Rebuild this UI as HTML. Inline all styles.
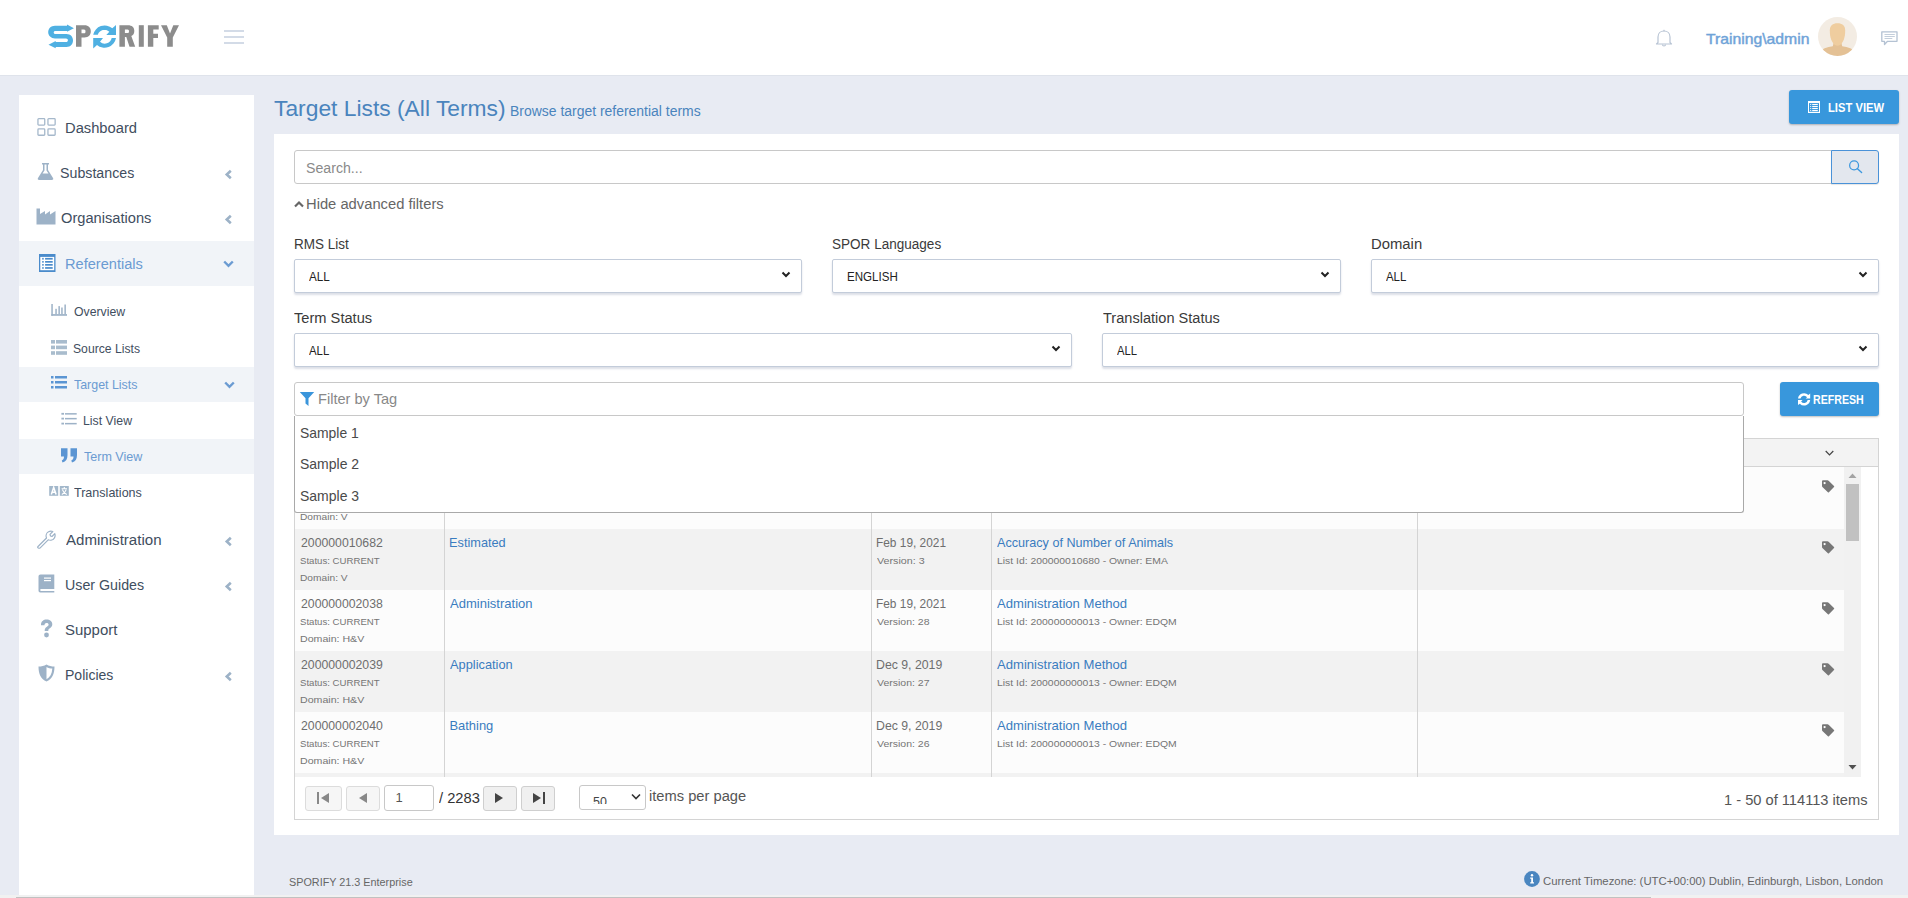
<!DOCTYPE html>
<html><head><meta charset="utf-8"><title>SPORIFY - Target Lists</title>
<style>
html,body{margin:0;padding:0;}
body{width:1908px;height:898px;overflow:hidden;position:relative;background:#e8ebf3;font-family:"Liberation Sans", sans-serif;}
</style></head><body>
<div style="position:absolute;left:0px;top:0px;width:1908px;height:75px;background:#fff;"></div>
<div style="position:absolute;left:0px;top:75px;width:1908px;height:1px;background:#dfe3eb;"></div>
<svg style="position:absolute;left:46px;top:22px" width="140" height="30" viewBox="46 22 140 30">
<g fill="#4fb0e2">
<path d="M67 25.7 L67 24.5 L73.9 28.2 L67 31.7 L67 30.9 L55.5 30.9 C54.3 30.9 53.7 31.6 53.7 32.45 C53.7 33.3 54.3 34 55.5 34 L66.5 34 C70.5 34 73 36.8 73 40.4 C73 44 70.5 46.9 66.5 46.9 L55.7 46.9 L55.7 48.2 L48.5 44.7 L55.7 41 L55.7 42 L66 42 C67.2 42 67.9 41.2 67.9 40.2 C67.9 39.2 67.2 38.4 66 38.4 L55 38.4 C51 38.4 48.2 35.5 48.2 32.2 C48.2 28.5 51 25.7 55 25.7 Z"/>
<path d="M93.2 34.8 A11.7 11.7 0 0 1 112.3 28.3 L116 25 L116 34.9 L106.3 34.9 L109.3 31.8 A7 7 0 0 0 97.8 34.8 Z"/>
<path d="M116 38 A11.7 11.7 0 0 1 97 45 L93.2 48.6 L93.2 38 L103 38 L100 41.7 A7 7 0 0 0 111.7 38 Z"/>
</g>
<g fill="#8c8c8c">
<path d="M76 25.2 L84.5 25.2 C88.5 25.2 90.8 27.5 90.8 31.3 C90.8 35.2 88.5 37.5 84.5 37.5 L81.5 37.5 L81.5 46.8 L76 46.8 Z M81.5 29.5 L81.5 33.3 L84 33.3 C85 33.3 85.5 32.6 85.5 31.4 C85.5 30.2 85 29.5 84 29.5 Z"/>
<path d="M119.4 25.2 L128 25.2 C132 25.2 134.3 27.3 134.3 31 C134.3 33.5 133.2 35.2 131.3 36.1 L135.2 46.8 L129.5 46.8 L126.3 37.1 L124.9 37.1 L124.9 46.8 L119.4 46.8 Z M124.9 29.4 L124.9 33.1 L127.5 33.1 C128.5 33.1 129 32.4 129 31.2 C129 30.1 128.5 29.4 127.5 29.4 Z"/>
<rect x="138.8" y="25.2" width="5" height="21.6"/>
<path d="M147.9 25.2 L158.7 25.2 L158.7 29.6 L153.3 29.6 L153.3 33.7 L158 33.7 L158 38 L153.3 38 L153.3 46.8 L147.9 46.8 Z"/>
<path d="M161 25.2 L166.8 25.2 L170 33.5 L173.3 25.2 L179 25.2 L172.8 37.6 L172.8 46.8 L167.2 46.8 L167.2 37.6 Z"/>
</g></svg>
<div style="position:absolute;left:224px;top:30px;width:20px;height:2px;background:#d3dbe7;"></div>
<div style="position:absolute;left:224px;top:36px;width:20px;height:2px;background:#d3dbe7;"></div>
<div style="position:absolute;left:224px;top:42px;width:20px;height:2px;background:#d3dbe7;"></div>
<svg style="position:absolute;left:1654px;top:28px" width="20" height="20" viewBox="0 0 20 20">
<path d="M4 14.5 L4 9 C4 5.5 6.5 3 10 3 C13.5 3 16 5.5 16 9 L16 14.5 L17.5 16 L2.5 16 Z" fill="none" stroke="#b8c4d4" stroke-width="1.2" stroke-linejoin="round"/>
<path d="M8.5 16.5 C8.5 17.5 9.2 18 10 18 C10.8 18 11.5 17.5 11.5 16.5" fill="none" stroke="#b8c4d4" stroke-width="1.2"/>
<rect x="9.4" y="1.8" width="1.2" height="1.5" fill="#b8c4d4"/>
</svg>
<div style="position:absolute;left:1705.70px;top:32.22px;font-size:14.97px;line-height:14.97px;color:#6fa3d8;white-space:nowrap;transform:scaleX(1.0510);transform-origin:0 0;-webkit-text-stroke:0.45px #6fa3d8;">Training\admin</div>
<svg style="position:absolute;left:1818px;top:17px" width="39" height="39" viewBox="0 0 39 39">
<defs><clipPath id="cav"><circle cx="19.5" cy="19.5" r="19.5"/></clipPath></defs>
<circle cx="19.5" cy="19.5" r="19.5" fill="#f3ece3"/>
<g clip-path="url(#cav)">
<path d="M0 35.5 C4 31.5 9 30 14.8 29.2 L15.8 25 L23.2 25 L24.2 29.2 C30 30 35 31.5 39 35.5 L39 39 L0 39 Z" fill="#e4c195"/>
<path d="M11.8 13.5 C11.8 8.8 14.8 6.3 19.5 6.3 C24.2 6.3 27.2 8.8 27.2 13.5 C27.2 20 25.5 25.5 22 28 C20.5 29 18.5 29 17 28 C13.5 25.5 11.8 20 11.8 13.5 Z" fill="#efcd9f"/>
</g></svg>
<svg style="position:absolute;left:1880px;top:30px" width="19" height="16" viewBox="0 0 19 16">
<path d="M1.8 1.8 L17 1.8 L17 11.3 L7.5 11.3 L4.5 14.5 L4.5 11.3 L1.8 11.3 Z" fill="none" stroke="#b4c2d3" stroke-width="1.3" stroke-linejoin="round"/>
<rect x="4.5" y="4" width="10.3" height="0.8" fill="#b4c2d3"/>
<rect x="4.5" y="6" width="10.3" height="0.8" fill="#b4c2d3"/>
<rect x="4.5" y="8" width="7.8" height="0.8" fill="#b4c2d3"/>
</svg>
<div style="position:absolute;left:19px;top:95px;width:235px;height:803px;background:#fff;"></div>
<div style="position:absolute;left:19px;top:241px;width:235px;height:45px;background:#f1f4f8;"></div>
<div style="position:absolute;left:19px;top:367px;width:235px;height:35px;background:#f1f4f8;"></div>
<div style="position:absolute;left:19px;top:439px;width:235px;height:35px;background:#f1f4f8;"></div>
<div style="position:absolute;left:65.09px;top:121.10px;font-size:14.53px;line-height:14.53px;color:#3f4e60;white-space:nowrap;transform:scaleX(1.0143);transform-origin:0 0;">Dashboard</div>
<div style="position:absolute;left:59.62px;top:166.10px;font-size:14.53px;line-height:14.53px;color:#3f4e60;white-space:nowrap;transform:scaleX(0.9787);transform-origin:0 0;">Substances</div>
<div style="position:absolute;left:60.60px;top:211.10px;font-size:14.53px;line-height:14.53px;color:#3f4e60;white-space:nowrap;transform:scaleX(1.0090);transform-origin:0 0;">Organisations</div>
<div style="position:absolute;left:65.09px;top:257.10px;font-size:14.53px;line-height:14.53px;color:#6b9bd2;white-space:nowrap;transform:scaleX(1.0053);transform-origin:0 0;">Referentials</div>
<div style="position:absolute;left:73.60px;top:305.08px;font-size:13.37px;line-height:13.37px;color:#3f4e60;white-space:nowrap;transform:scaleX(0.9179);transform-origin:0 0;">Overview</div>
<div style="position:absolute;left:72.69px;top:342.08px;font-size:13.37px;line-height:13.37px;color:#3f4e60;white-space:nowrap;transform:scaleX(0.9111);transform-origin:0 0;">Source Lists</div>
<div style="position:absolute;left:73.60px;top:378.08px;font-size:13.37px;line-height:13.37px;color:#6b9bd2;white-space:nowrap;transform:scaleX(0.9294);transform-origin:0 0;">Target Lists</div>
<div style="position:absolute;left:82.88px;top:414.28px;font-size:13.37px;line-height:13.37px;color:#3f4e60;white-space:nowrap;transform:scaleX(0.9212);transform-origin:0 0;">List View</div>
<div style="position:absolute;left:83.80px;top:449.68px;font-size:13.37px;line-height:13.37px;color:#6b9bd2;white-space:nowrap;transform:scaleX(0.9387);transform-origin:0 0;">Term View</div>
<div style="position:absolute;left:73.90px;top:486.38px;font-size:13.37px;line-height:13.37px;color:#3f4e60;white-space:nowrap;transform:scaleX(0.9389);transform-origin:0 0;">Translations</div>
<div style="position:absolute;left:65.80px;top:533.10px;font-size:14.53px;line-height:14.53px;color:#3f4e60;white-space:nowrap;transform:scaleX(1.0391);transform-origin:0 0;">Administration</div>
<div style="position:absolute;left:64.82px;top:578.30px;font-size:14.53px;line-height:14.53px;color:#3f4e60;white-space:nowrap;transform:scaleX(0.9812);transform-origin:0 0;">User Guides</div>
<div style="position:absolute;left:64.77px;top:623.10px;font-size:14.53px;line-height:14.53px;color:#3f4e60;white-space:nowrap;transform:scaleX(1.0300);transform-origin:0 0;">Support</div>
<div style="position:absolute;left:64.83px;top:667.90px;font-size:14.53px;line-height:14.53px;color:#3f4e60;white-space:nowrap;transform:scaleX(0.9673);transform-origin:0 0;">Policies</div>
<svg style="position:absolute;left:224px;top:169px" width="9" height="11" viewBox="0 0 9 11"><path d="M6.8 1.8 L2.8 5.5 L6.8 9.2" fill="none" stroke="#9db2c7" stroke-width="2.6"/></svg>
<svg style="position:absolute;left:224px;top:214px" width="9" height="11" viewBox="0 0 9 11"><path d="M6.8 1.8 L2.8 5.5 L6.8 9.2" fill="none" stroke="#9db2c7" stroke-width="2.6"/></svg>
<svg style="position:absolute;left:224px;top:536px" width="9" height="11" viewBox="0 0 9 11"><path d="M6.8 1.8 L2.8 5.5 L6.8 9.2" fill="none" stroke="#9db2c7" stroke-width="2.6"/></svg>
<svg style="position:absolute;left:224px;top:581px" width="9" height="11" viewBox="0 0 9 11"><path d="M6.8 1.8 L2.8 5.5 L6.8 9.2" fill="none" stroke="#9db2c7" stroke-width="2.6"/></svg>
<svg style="position:absolute;left:224px;top:671px" width="9" height="11" viewBox="0 0 9 11"><path d="M6.8 1.8 L2.8 5.5 L6.8 9.2" fill="none" stroke="#9db2c7" stroke-width="2.6"/></svg>
<svg style="position:absolute;left:223px;top:260px" width="11" height="8" viewBox="0 0 11 8"><path d="M1.2 1.5 L5.5 5.8 L9.8 1.5" fill="none" stroke="#6b9bd2" stroke-width="2.4"/></svg>
<svg style="position:absolute;left:224px;top:381px" width="11" height="8" viewBox="0 0 11 8"><path d="M1.2 1.5 L5.5 5.8 L9.8 1.5" fill="none" stroke="#6b9bd2" stroke-width="2.4"/></svg>
<svg style="position:absolute;left:37px;top:118px" width="19" height="19" viewBox="0 0 19 19" fill="none" stroke="#a5b8cb" stroke-width="1.3">
<rect x="0.95" y="0.65" width="6.8" height="6.4" rx="0.8"/><rect x="10.95" y="0.65" width="7.2" height="6.4" rx="0.8"/>
<rect x="0.95" y="10.85" width="6.8" height="6.4" rx="0.8"/><rect x="10.95" y="10.85" width="7.2" height="6.4" rx="0.8"/></svg>
<svg style="position:absolute;left:37px;top:162px" width="17" height="19" viewBox="0 0 17 19">
<path d="M5 1 L12 1 L12 2.5 L11 2.5 L11 8 L16 16 C16.7 17.3 16 18 14.8 18 L2.2 18 C1 18 0.3 17.3 1 16 L6 8 L6 2.5 L5 2.5 Z" fill="#9db2c7"/>
<path d="M7.5 2.5 L9.5 2.5 L9.5 8.5 L11.5 11.5 L5.5 11.5 L7.5 8.5 Z" fill="#fff"/></svg>
<svg style="position:absolute;left:36px;top:208px" width="20" height="17" viewBox="0 0 20 17">
<path d="M0.5 0.5 L4 0.5 L4 6 L9 3 L9 6.5 L14 3 L14 6.5 L19.5 3 L19.5 16.5 L0.5 16.5 Z" fill="#9db2c7"/></svg>
<svg style="position:absolute;left:39px;top:254px" width="17" height="18" viewBox="0 0 17 18">
<rect x="0" y="0" width="16.5" height="18" fill="#4a8bcb"/><rect x="1.3" y="2.9" width="13.9" height="13.3" fill="#fff"/>
<g fill="#4a8bcb"><rect x="3.2" y="3.9" width="1.5" height="1.7"/><rect x="6.1" y="3.9" width="7.6" height="1.7"/>
<rect x="3.2" y="7" width="1.5" height="1.7"/><rect x="6.1" y="7" width="7.6" height="1.7"/>
<rect x="3.2" y="10" width="1.5" height="1.7"/><rect x="6.1" y="10" width="7.6" height="1.7"/>
<rect x="3.2" y="13.1" width="1.5" height="1.7"/><rect x="6.1" y="13.1" width="7.6" height="1.7"/></g></svg>
<svg style="position:absolute;left:51px;top:304px" width="16" height="12" viewBox="0 0 16 12" fill="#9db2c7">
<rect x="0.3" y="0" width="1.5" height="11.8"/><rect x="0.3" y="10.1" width="15.7" height="1.7"/>
<rect x="4.3" y="4.8" width="1.5" height="5.3"/><rect x="7.4" y="2.1" width="1.5" height="8"/><rect x="10.2" y="3.5" width="1.5" height="6.6"/><rect x="13.4" y="0.5" width="1.5" height="9.6"/></svg>
<svg style="position:absolute;left:51px;top:340px" width="16" height="15" viewBox="0 0 16 15" fill="#a9bccd">
<rect x="0" y="0" width="4" height="3.6"/><rect x="5" y="0" width="11" height="3.6"/>
<rect x="0" y="5.6" width="4" height="3.6"/><rect x="5" y="5.6" width="11" height="3.6"/>
<rect x="0" y="11.2" width="4" height="3.6"/><rect x="5" y="11.2" width="11" height="3.6"/></svg>
<svg style="position:absolute;left:51px;top:376px" width="16" height="13" viewBox="0 0 16 13" fill="#5b95d3">
<rect x="0" y="0" width="2.5" height="2.5"/><rect x="4" y="0" width="12" height="2.5"/>
<rect x="0" y="5" width="2.5" height="2.5"/><rect x="4" y="5" width="12" height="2.5"/>
<rect x="0" y="10" width="2.5" height="2.5"/><rect x="4" y="10" width="12" height="2.5"/></svg>
<svg style="position:absolute;left:61px;top:412px" width="16" height="14" viewBox="0 0 16 14" fill="#9db2c7">
<rect x="0.4" y="0.9" width="2.6" height="1.8"/><rect x="4" y="1.1" width="11.7" height="1.5"/>
<rect x="0.4" y="5.7" width="2.6" height="1.8"/><rect x="4" y="5.9" width="11.7" height="1.5"/>
<rect x="0.4" y="10.7" width="2.6" height="1.8"/><rect x="4" y="10.9" width="11.7" height="1.5"/></svg>
<svg style="position:absolute;left:61px;top:448px" width="16" height="15" viewBox="0 0 16 15" fill="#5b95d3">
<path d="M0 0.3 L6.5 0.3 L6.5 7 C6.5 11 5 13.5 1.5 14.5 L0.8 12.5 C2.5 11.8 3 10.5 3 8.5 L0 8.5 Z"/>
<path d="M9.5 0.3 L16 0.3 L16 7 C16 11 14.5 13.5 11 14.5 L10.3 12.5 C12 11.8 12.5 10.5 12.5 8.5 L9.5 8.5 Z"/></svg>
<svg style="position:absolute;left:49px;top:486px" width="20" height="10" viewBox="0 0 20 10">
<rect x="0.2" y="0" width="9" height="9.8" fill="#a3b8cb"/><rect x="10.8" y="0" width="9" height="9.8" fill="#a3b8cb"/>
<path d="M2.3 8.6 L4.7 1.4 L7.1 8.6 M3.2 6.2 L6.2 6.2" stroke="#fff" stroke-width="1.5" fill="none"/>
<path d="M15.3 1 L15.3 2.3 M12.6 2.8 L18 2.8 M13.4 3.6 C14.2 6 15.6 7.6 17.8 8.6 M17.2 3.6 C16.4 6 15 7.6 12.8 8.6" stroke="#fff" stroke-width="1.1" fill="none"/></svg>
<svg style="position:absolute;left:37px;top:530px" width="19" height="19" viewBox="0 0 19 19">
<path d="M1.5 16 L9.5 8 C8.5 5.5 9.5 2.8 11.5 1.8 C13 1 14.5 1 15.8 1.5 L13 4.3 L13.5 6 L15 6.5 L17.8 3.7 C18.3 5 18.2 6.5 17.4 8 C16.3 10 13.6 10.8 11.2 9.8 L3.2 17.8 C2.5 18.5 1.2 18.4 0.8 17.6 C0.4 17 0.6 16.8 1.5 16 Z" fill="none" stroke="#9db2c7" stroke-width="1.2" stroke-linejoin="round"/></svg>
<svg style="position:absolute;left:38px;top:574px" width="17" height="19" viewBox="0 0 17 19">
<path d="M2.5 0.5 L16.3 0.5 L16.3 15 L3.5 15 C2.5 15 2.2 15.5 2.2 16 C2.2 16.5 2.5 17 3.5 17 L16.3 17 L16.3 18.5 L2.5 18.5 C1.2 18.5 0.5 17.5 0.5 16.5 L0.5 2.5 C0.5 1.3 1.3 0.5 2.5 0.5 Z" fill="#9db2c7"/>
<rect x="6" y="3.5" width="7" height="1.2" fill="#fff"/><rect x="6" y="6" width="7" height="1.2" fill="#fff"/></svg>
<svg style="position:absolute;left:40px;top:619px" width="13" height="19" viewBox="0 0 13 19">
<path d="M1 5.5 C1 2.5 3.5 0.5 6.5 0.5 C9.8 0.5 12.3 2.5 12.3 5.3 C12.3 7.5 11 8.6 9.5 9.5 C8.5 10.1 8.3 10.5 8.3 12 L4.7 12 C4.7 9.8 5.2 8.8 7 7.7 C8.2 7 8.6 6.5 8.6 5.6 C8.6 4.6 7.8 4 6.6 4 C5.3 4 4.5 4.8 4.5 6.2 L1 6.2 Z" fill="#9db2c7"/>
<circle cx="6.5" cy="16" r="2.4" fill="#9db2c7"/></svg>
<svg style="position:absolute;left:38px;top:664px" width="17" height="18" viewBox="0 0 17 18">
<path d="M8.5 0.5 C11 2 13.5 2.5 16.5 2.5 C16.5 10 14 15 8.5 17.5 C3 15 0.5 10 0.5 2.5 C3.5 2.5 6 2 8.5 0.5 Z" fill="#9db2c7"/>
<path d="M8.5 3 C10.5 4 12.2 4.5 14.3 4.6 C14 10 12 13.5 8.5 15.2 Z" fill="#fff"/></svg>
<div style="position:absolute;left:274.10px;top:97.67px;font-size:22.09px;line-height:22.09px;color:#4a84bd;white-space:nowrap;transform:scaleX(1.0336);transform-origin:0 0;">Target Lists (All Terms)</div>
<div style="position:absolute;left:510.23px;top:103.82px;font-size:14.39px;line-height:14.39px;color:#4a84bd;white-space:nowrap;transform:scaleX(0.9703);transform-origin:0 0;">Browse target referential terms</div>
<div style="position:absolute;left:1789px;top:90px;width:110px;height:34px;background:#3897dc;border-radius:3px;box-shadow:0 1px 2px rgba(0,0,0,.25);"></div>
<svg style="position:absolute;left:1808px;top:101px" width="12" height="12" viewBox="0 0 12 12">
<rect x="0" y="0" width="12" height="12" fill="#fff"/><rect x="1" y="2.1" width="10" height="8.7" fill="#3897dc"/>
<g fill="#fff"><rect x="2.2" y="3" width="1" height="1.1"/><rect x="4.2" y="3" width="5.6" height="1.1"/>
<rect x="2.2" y="5" width="1" height="1.1"/><rect x="4.2" y="5" width="5.6" height="1.1"/>
<rect x="2.2" y="7" width="1" height="1.1"/><rect x="4.2" y="7" width="5.6" height="1.1"/>
<rect x="2.2" y="9" width="1" height="1.1"/><rect x="4.2" y="9" width="5.6" height="1.1"/></g></svg>
<div style="position:absolute;left:1828.11px;top:101.50px;font-size:12.65px;line-height:12.65px;color:#fff;font-weight:bold;white-space:nowrap;transform:scaleX(0.8871);transform-origin:0 0;">LIST VIEW</div>
<div style="position:absolute;left:274px;top:134px;width:1625px;height:701px;background:#fff;"></div>
<div style="position:absolute;left:294px;top:150px;width:1538px;height:34px;box-sizing:border-box;border:1px solid #c8c8c8;border-radius:3px 0 0 3px;background:#fff;"></div>
<div style="position:absolute;left:306.32px;top:161.10px;font-size:14.53px;line-height:14.53px;color:#8a8a8a;white-space:nowrap;transform:scaleX(0.9750);transform-origin:0 0;">Search...</div>
<div style="position:absolute;left:1831px;top:150px;width:48px;height:34px;box-sizing:border-box;border:1px solid #4a92d8;border-radius:0 3px 3px 0;background:#e3e7ee;box-shadow:0 1px 1px rgba(0,0,0,.1);"></div>
<svg style="position:absolute;left:1848px;top:160px" width="15" height="14" viewBox="0 0 15 14">
<circle cx="6.1" cy="5.4" r="4.45" fill="none" stroke="#3d98de" stroke-width="1.25"/><path d="M9.2 8.6 L13.6 12.6" stroke="#3d98de" stroke-width="1.4" stroke-linecap="round"/></svg>
<svg style="position:absolute;left:294px;top:200px" width="10" height="8" viewBox="0 0 10 8"><path d="M1 6.5 L5 2.5 L9 6.5" fill="none" stroke="#666" stroke-width="2.2"/></svg>
<div style="position:absolute;left:306.31px;top:196.75px;font-size:14.83px;line-height:14.83px;color:#666;white-space:nowrap;transform:scaleX(0.9942);transform-origin:0 0;">Hide advanced filters</div>
<div style="position:absolute;left:294.17px;top:237.10px;font-size:14.53px;line-height:14.53px;color:#3a3a3a;white-space:nowrap;transform:scaleX(0.9310);transform-origin:0 0;">RMS List</div>
<div style="position:absolute;left:831.87px;top:237.30px;font-size:14.53px;line-height:14.53px;color:#3a3a3a;white-space:nowrap;transform:scaleX(0.9328);transform-origin:0 0;">SPOR Languages</div>
<div style="position:absolute;left:1370.68px;top:237.10px;font-size:14.53px;line-height:14.53px;color:#3a3a3a;white-space:nowrap;transform:scaleX(1.0224);transform-origin:0 0;">Domain</div>
<div style="position:absolute;left:294.40px;top:311.10px;font-size:14.53px;line-height:14.53px;color:#3a3a3a;white-space:nowrap;transform:scaleX(1.0091);transform-origin:0 0;">Term Status</div>
<div style="position:absolute;left:1102.50px;top:311.10px;font-size:14.53px;line-height:14.53px;color:#3a3a3a;white-space:nowrap;transform:scaleX(1.0034);transform-origin:0 0;">Translation Status</div>
<div style="position:absolute;left:294px;top:259px;width:508px;height:34px;box-sizing:border-box;border:1px solid #c3ccda;border-radius:2px;background:#fff;box-shadow:0 2px 2px rgba(60,80,120,.18);"></div>
<div style="position:absolute;left:309.00px;top:270.33px;font-size:13.08px;line-height:13.08px;color:#222;white-space:nowrap;transform:scaleX(0.8913);transform-origin:0 0;">ALL</div>
<svg style="position:absolute;left:781px;top:271px" width="10" height="7" viewBox="0 0 10 7"><path d="M1.5 1.5 L5 5 L8.5 1.5" fill="none" stroke="#222" stroke-width="2"/></svg>
<div style="position:absolute;left:832px;top:259px;width:509px;height:34px;box-sizing:border-box;border:1px solid #c3ccda;border-radius:2px;background:#fff;box-shadow:0 2px 2px rgba(60,80,120,.18);"></div>
<div style="position:absolute;left:846.92px;top:270.33px;font-size:13.08px;line-height:13.08px;color:#222;white-space:nowrap;transform:scaleX(0.8839);transform-origin:0 0;">ENGLISH</div>
<svg style="position:absolute;left:1320px;top:271px" width="10" height="7" viewBox="0 0 10 7"><path d="M1.5 1.5 L5 5 L8.5 1.5" fill="none" stroke="#222" stroke-width="2"/></svg>
<div style="position:absolute;left:1371px;top:259px;width:508px;height:34px;box-sizing:border-box;border:1px solid #c3ccda;border-radius:2px;background:#fff;box-shadow:0 2px 2px rgba(60,80,120,.18);"></div>
<div style="position:absolute;left:1386.00px;top:270.33px;font-size:13.08px;line-height:13.08px;color:#222;white-space:nowrap;transform:scaleX(0.8739);transform-origin:0 0;">ALL</div>
<svg style="position:absolute;left:1858px;top:271px" width="10" height="7" viewBox="0 0 10 7"><path d="M1.5 1.5 L5 5 L8.5 1.5" fill="none" stroke="#222" stroke-width="2"/></svg>
<div style="position:absolute;left:294px;top:333px;width:778px;height:34px;box-sizing:border-box;border:1px solid #c3ccda;border-radius:2px;background:#fff;box-shadow:0 2px 2px rgba(60,80,120,.18);"></div>
<div style="position:absolute;left:309.00px;top:344.33px;font-size:13.08px;line-height:13.08px;color:#222;white-space:nowrap;transform:scaleX(0.8696);transform-origin:0 0;">ALL</div>
<svg style="position:absolute;left:1051px;top:345px" width="10" height="7" viewBox="0 0 10 7"><path d="M1.5 1.5 L5 5 L8.5 1.5" fill="none" stroke="#222" stroke-width="2"/></svg>
<div style="position:absolute;left:1102px;top:333px;width:777px;height:34px;box-sizing:border-box;border:1px solid #c3ccda;border-radius:2px;background:#fff;box-shadow:0 2px 2px rgba(60,80,120,.18);"></div>
<div style="position:absolute;left:1117.00px;top:344.33px;font-size:13.08px;line-height:13.08px;color:#222;white-space:nowrap;transform:scaleX(0.8609);transform-origin:0 0;">ALL</div>
<svg style="position:absolute;left:1858px;top:345px" width="10" height="7" viewBox="0 0 10 7"><path d="M1.5 1.5 L5 5 L8.5 1.5" fill="none" stroke="#222" stroke-width="2"/></svg>
<div style="position:absolute;left:1780px;top:382px;width:99px;height:34px;background:#3897dc;border-radius:3px;box-shadow:0 1px 2px rgba(0,0,0,.25);"></div>
<svg style="position:absolute;left:1797px;top:392px" width="15" height="15" viewBox="0 0 15 15">
<path d="M1 6.6 A6.1 6.1 0 0 1 11.4 3 L13.2 1.6 L13.2 6.6 L8.6 6.6 L10.1 5.2 A3.7 3.7 0 0 0 3.5 6.6 Z" fill="#fff"/>
<path d="M13.2 8.1 A6.1 6.1 0 0 1 2.8 11.7 L1 13.1 L1 8.1 L5.6 8.1 L4.1 9.5 A3.7 3.7 0 0 0 10.7 8.1 Z" fill="#fff"/></svg>
<div style="position:absolute;left:1813.18px;top:394.05px;font-size:12.94px;line-height:12.94px;color:#fff;font-weight:bold;white-space:nowrap;transform:scaleX(0.8200);transform-origin:0 0;">REFRESH</div>
<div style="position:absolute;left:294px;top:438px;width:1585px;height:382px;box-sizing:border-box;border:1px solid #d4d4d4;background:#fff;"></div>
<div style="position:absolute;left:295px;top:439px;width:1583px;height:27px;background:#f3f3f3;border-bottom:1px solid #d4d4d4;"></div>
<svg style="position:absolute;left:1825px;top:450px" width="9" height="7" viewBox="0 0 9 7"><path d="M0.7 1 L4.5 5 L8.3 1" fill="none" stroke="#444" stroke-width="1.2"/></svg>
<div style="position:absolute;left:295px;top:467px;width:1549px;height:310px;overflow:hidden;">
<div style="position:absolute;left:-295px;top:-467px;width:1908px;height:898px;">
<div style="position:absolute;left:295px;top:466px;width:1549px;height:63px;background:#fcfcfc;"></div>
<div style="position:absolute;left:295px;top:529px;width:1549px;height:61px;background:#f2f2f2;"></div>
<div style="position:absolute;left:295px;top:590px;width:1549px;height:61px;background:#fcfcfc;"></div>
<div style="position:absolute;left:295px;top:651px;width:1549px;height:61px;background:#f2f2f2;"></div>
<div style="position:absolute;left:295px;top:712px;width:1549px;height:61px;background:#fcfcfc;"></div>
<div style="position:absolute;left:295px;top:773px;width:1549px;height:61px;background:#f2f2f2;"></div>
<div style="position:absolute;left:444px;top:467px;width:1px;height:310px;background:#d4d4d4;"></div>
<div style="position:absolute;left:871px;top:467px;width:1px;height:310px;background:#d4d4d4;"></div>
<div style="position:absolute;left:991px;top:467px;width:1px;height:310px;background:#d4d4d4;"></div>
<div style="position:absolute;left:1417px;top:467px;width:1px;height:310px;background:#d4d4d4;"></div>
<div style="position:absolute;left:300.20px;top:511.92px;font-size:9.80px;line-height:9.80px;color:#757575;white-space:nowrap;transform:scaleX(1.0413);transform-origin:0 0;">Domain: V</div>
<svg style="position:absolute;left:1821px;top:479.8px" width="15" height="14" viewBox="0 0 15 14">
<path d="M1 1.3 Q1 0.3 2 0.3 L6.6 0.3 Q7.1 0.3 7.6 0.8 L13 6.1 Q13.5 6.6 13 7.1 L7.9 12.2 Q7.4 12.7 6.9 12.2 L1.4 6.9 Q1 6.5 1 6 Z" fill="#777"/><circle cx="3.6" cy="3.1" r="1.15" fill="#fff"/></svg>
<div style="position:absolute;left:300.60px;top:537.45px;font-size:12.94px;line-height:12.94px;color:#6e6e6e;white-space:nowrap;transform:scaleX(0.9477);transform-origin:0 0;">200000010682</div>
<div style="position:absolute;left:300.10px;top:555.72px;font-size:9.80px;line-height:9.80px;color:#757575;white-space:nowrap;transform:scaleX(0.9815);transform-origin:0 0;">Status: CURRENT</div>
<div style="position:absolute;left:300.20px;top:572.92px;font-size:9.80px;line-height:9.80px;color:#757575;white-space:nowrap;transform:scaleX(1.0413);transform-origin:0 0;">Domain: V</div>
<div style="position:absolute;left:449.41px;top:537.45px;font-size:12.94px;line-height:12.94px;color:#3a7cc0;white-space:nowrap;transform:scaleX(0.9857);transform-origin:0 0;">Estimated</div>
<div style="position:absolute;left:876.38px;top:537.45px;font-size:12.94px;line-height:12.94px;color:#6e6e6e;white-space:nowrap;transform:scaleX(0.9187);transform-origin:0 0;">Feb 19, 2021</div>
<div style="position:absolute;left:877.00px;top:555.72px;font-size:9.80px;line-height:9.80px;color:#757575;white-space:nowrap;transform:scaleX(1.0930);transform-origin:0 0;">Version: 3</div>
<div style="position:absolute;left:997.20px;top:537.45px;font-size:12.94px;line-height:12.94px;color:#3a7cc0;white-space:nowrap;transform:scaleX(0.9756);transform-origin:0 0;">Accuracy of Number of Animals</div>
<div style="position:absolute;left:997.00px;top:555.72px;font-size:9.80px;line-height:9.80px;color:#757575;white-space:nowrap;transform:scaleX(1.0596);transform-origin:0 0;">List Id: 200000010680 - Owner: EMA</div>
<svg style="position:absolute;left:1821px;top:540.8px" width="15" height="14" viewBox="0 0 15 14">
<path d="M1 1.3 Q1 0.3 2 0.3 L6.6 0.3 Q7.1 0.3 7.6 0.8 L13 6.1 Q13.5 6.6 13 7.1 L7.9 12.2 Q7.4 12.7 6.9 12.2 L1.4 6.9 Q1 6.5 1 6 Z" fill="#777"/><circle cx="3.6" cy="3.1" r="1.15" fill="#fff"/></svg>
<div style="position:absolute;left:300.60px;top:598.45px;font-size:12.94px;line-height:12.94px;color:#6e6e6e;white-space:nowrap;transform:scaleX(0.9477);transform-origin:0 0;">200000002038</div>
<div style="position:absolute;left:300.10px;top:616.72px;font-size:9.80px;line-height:9.80px;color:#757575;white-space:nowrap;transform:scaleX(0.9815);transform-origin:0 0;">Status: CURRENT</div>
<div style="position:absolute;left:300.20px;top:633.92px;font-size:9.80px;line-height:9.80px;color:#757575;white-space:nowrap;transform:scaleX(1.0831);transform-origin:0 0;">Domain: H&amp;V</div>
<div style="position:absolute;left:450.40px;top:598.45px;font-size:12.94px;line-height:12.94px;color:#3a7cc0;white-space:nowrap;transform:scaleX(1.0073);transform-origin:0 0;">Administration</div>
<div style="position:absolute;left:876.38px;top:598.45px;font-size:12.94px;line-height:12.94px;color:#6e6e6e;white-space:nowrap;transform:scaleX(0.9187);transform-origin:0 0;">Feb 19, 2021</div>
<div style="position:absolute;left:877.00px;top:616.72px;font-size:9.80px;line-height:9.80px;color:#757575;white-space:nowrap;transform:scaleX(1.0714);transform-origin:0 0;">Version: 28</div>
<div style="position:absolute;left:997.20px;top:598.45px;font-size:12.94px;line-height:12.94px;color:#3a7cc0;white-space:nowrap;transform:scaleX(1.0109);transform-origin:0 0;">Administration Method</div>
<div style="position:absolute;left:997.00px;top:616.72px;font-size:9.80px;line-height:9.80px;color:#757575;white-space:nowrap;transform:scaleX(1.0609);transform-origin:0 0;">List Id: 200000000013 - Owner: EDQM</div>
<svg style="position:absolute;left:1821px;top:601.8px" width="15" height="14" viewBox="0 0 15 14">
<path d="M1 1.3 Q1 0.3 2 0.3 L6.6 0.3 Q7.1 0.3 7.6 0.8 L13 6.1 Q13.5 6.6 13 7.1 L7.9 12.2 Q7.4 12.7 6.9 12.2 L1.4 6.9 Q1 6.5 1 6 Z" fill="#777"/><circle cx="3.6" cy="3.1" r="1.15" fill="#fff"/></svg>
<div style="position:absolute;left:300.60px;top:659.45px;font-size:12.94px;line-height:12.94px;color:#6e6e6e;white-space:nowrap;transform:scaleX(0.9477);transform-origin:0 0;">200000002039</div>
<div style="position:absolute;left:300.10px;top:677.72px;font-size:9.80px;line-height:9.80px;color:#757575;white-space:nowrap;transform:scaleX(0.9815);transform-origin:0 0;">Status: CURRENT</div>
<div style="position:absolute;left:300.20px;top:694.92px;font-size:9.80px;line-height:9.80px;color:#757575;white-space:nowrap;transform:scaleX(1.0831);transform-origin:0 0;">Domain: H&amp;V</div>
<div style="position:absolute;left:450.40px;top:659.45px;font-size:12.94px;line-height:12.94px;color:#3a7cc0;white-space:nowrap;transform:scaleX(0.9905);transform-origin:0 0;">Application</div>
<div style="position:absolute;left:876.35px;top:659.45px;font-size:12.94px;line-height:12.94px;color:#6e6e6e;white-space:nowrap;transform:scaleX(0.9500);transform-origin:0 0;">Dec 9, 2019</div>
<div style="position:absolute;left:877.00px;top:677.72px;font-size:9.80px;line-height:9.80px;color:#757575;white-space:nowrap;transform:scaleX(1.0714);transform-origin:0 0;">Version: 27</div>
<div style="position:absolute;left:997.20px;top:659.45px;font-size:12.94px;line-height:12.94px;color:#3a7cc0;white-space:nowrap;transform:scaleX(1.0109);transform-origin:0 0;">Administration Method</div>
<div style="position:absolute;left:997.00px;top:677.72px;font-size:9.80px;line-height:9.80px;color:#757575;white-space:nowrap;transform:scaleX(1.0609);transform-origin:0 0;">List Id: 200000000013 - Owner: EDQM</div>
<svg style="position:absolute;left:1821px;top:662.8px" width="15" height="14" viewBox="0 0 15 14">
<path d="M1 1.3 Q1 0.3 2 0.3 L6.6 0.3 Q7.1 0.3 7.6 0.8 L13 6.1 Q13.5 6.6 13 7.1 L7.9 12.2 Q7.4 12.7 6.9 12.2 L1.4 6.9 Q1 6.5 1 6 Z" fill="#777"/><circle cx="3.6" cy="3.1" r="1.15" fill="#fff"/></svg>
<div style="position:absolute;left:300.60px;top:720.45px;font-size:12.94px;line-height:12.94px;color:#6e6e6e;white-space:nowrap;transform:scaleX(0.9477);transform-origin:0 0;">200000002040</div>
<div style="position:absolute;left:300.10px;top:738.72px;font-size:9.80px;line-height:9.80px;color:#757575;white-space:nowrap;transform:scaleX(0.9815);transform-origin:0 0;">Status: CURRENT</div>
<div style="position:absolute;left:300.20px;top:755.92px;font-size:9.80px;line-height:9.80px;color:#757575;white-space:nowrap;transform:scaleX(1.0831);transform-origin:0 0;">Domain: H&amp;V</div>
<div style="position:absolute;left:449.40px;top:720.45px;font-size:12.94px;line-height:12.94px;color:#3a7cc0;white-space:nowrap;transform:scaleX(1.0000);transform-origin:0 0;">Bathing</div>
<div style="position:absolute;left:876.35px;top:720.45px;font-size:12.94px;line-height:12.94px;color:#6e6e6e;white-space:nowrap;transform:scaleX(0.9500);transform-origin:0 0;">Dec 9, 2019</div>
<div style="position:absolute;left:877.00px;top:738.72px;font-size:9.80px;line-height:9.80px;color:#757575;white-space:nowrap;transform:scaleX(1.0714);transform-origin:0 0;">Version: 26</div>
<div style="position:absolute;left:997.20px;top:720.45px;font-size:12.94px;line-height:12.94px;color:#3a7cc0;white-space:nowrap;transform:scaleX(1.0109);transform-origin:0 0;">Administration Method</div>
<div style="position:absolute;left:997.00px;top:738.72px;font-size:9.80px;line-height:9.80px;color:#757575;white-space:nowrap;transform:scaleX(1.0609);transform-origin:0 0;">List Id: 200000000013 - Owner: EDQM</div>
<svg style="position:absolute;left:1821px;top:723.8px" width="15" height="14" viewBox="0 0 15 14">
<path d="M1 1.3 Q1 0.3 2 0.3 L6.6 0.3 Q7.1 0.3 7.6 0.8 L13 6.1 Q13.5 6.6 13 7.1 L7.9 12.2 Q7.4 12.7 6.9 12.2 L1.4 6.9 Q1 6.5 1 6 Z" fill="#777"/><circle cx="3.6" cy="3.1" r="1.15" fill="#fff"/></svg>
</div></div>
<div style="position:absolute;left:1844px;top:467px;width:17px;height:310px;background:#f1f1f1;"></div>
<svg style="position:absolute;left:1848px;top:472px" width="9" height="7" viewBox="0 0 9 7"><path d="M0.5 6 L4.5 1.5 L8.5 6 Z" fill="#a3a3a3"/></svg>
<div style="position:absolute;left:1846px;top:484px;width:13px;height:57px;background:#c1c1c1;"></div>
<svg style="position:absolute;left:1848px;top:764px" width="9" height="7" viewBox="0 0 9 7"><path d="M0.5 1 L4.5 5.5 L8.5 1 Z" fill="#505050"/></svg>
<svg style="position:absolute;left:299px;top:391px" width="16" height="16" viewBox="0 0 16 16"><path d="M0.8 1 L15.2 1 L9.5 7.3 L9.5 15 L6.5 12.5 L6.5 7.3 Z" fill="#3a95db"/></svg>
<div style="position:absolute;left:317.52px;top:391.92px;font-size:14.97px;line-height:14.97px;color:#888;white-space:nowrap;transform:scaleX(0.9750);transform-origin:0 0;">Filter by Tag</div>
<div style="position:absolute;left:294px;top:416px;width:1450px;height:97px;box-sizing:border-box;border:1px solid #a9a9a9;border-top:none;border-radius:0 0 3px 3px;background:#fff;"></div>
<div style="position:absolute;left:294px;top:382px;width:1450px;height:34px;box-sizing:border-box;border:1px solid #c8c8c8;border-radius:3px;background:transparent;"></div>
<div style="position:absolute;left:300.38px;top:424.70px;font-size:15.12px;line-height:15.12px;color:#4a4a4a;white-space:nowrap;transform:scaleX(0.9206);transform-origin:0 0;">Sample 1</div>
<div style="position:absolute;left:300.37px;top:456.40px;font-size:15.12px;line-height:15.12px;color:#4a4a4a;white-space:nowrap;transform:scaleX(0.9254);transform-origin:0 0;">Sample 2</div>
<div style="position:absolute;left:300.37px;top:487.80px;font-size:15.12px;line-height:15.12px;color:#4a4a4a;white-space:nowrap;transform:scaleX(0.9254);transform-origin:0 0;">Sample 3</div>
<div style="position:absolute;left:305px;top:786px;width:37px;height:25px;box-sizing:border-box;border:1px solid #dcdcdc;border-radius:3px;background:#f6f6f6;"></div>
<div style="position:absolute;left:346px;top:786px;width:34px;height:25px;box-sizing:border-box;border:1px solid #dcdcdc;border-radius:3px;background:#f6f6f6;"></div>
<svg style="position:absolute;left:316px;top:791px" width="14" height="14" viewBox="0 0 14 14"><rect x="1" y="1" width="2" height="12" fill="#888"/><path d="M13 2 L5 7 L13 12 Z" fill="#888"/></svg>
<svg style="position:absolute;left:358px;top:792px" width="10" height="12" viewBox="0 0 10 12"><path d="M9 1 L1 6 L9 11 Z" fill="#888"/></svg>
<div style="position:absolute;left:384px;top:785px;width:50px;height:26px;box-sizing:border-box;border:1px solid #c8c8c8;border-radius:3px;background:#fff;"></div>
<div style="position:absolute;left:395.40px;top:792.25px;font-size:12.94px;line-height:12.94px;color:#555;white-space:nowrap;">1</div>
<div style="position:absolute;left:439.00px;top:791.14px;font-size:14.24px;line-height:14.24px;color:#333;white-space:nowrap;transform:scaleX(1.0308);transform-origin:0 0;">/ 2283</div>
<div style="position:absolute;left:483px;top:786px;width:34px;height:25px;box-sizing:border-box;border:1px solid #cfcfcf;border-radius:3px;background:#f0f0f0;"></div>
<div style="position:absolute;left:521px;top:786px;width:34px;height:25px;box-sizing:border-box;border:1px solid #cfcfcf;border-radius:3px;background:#f0f0f0;"></div>
<svg style="position:absolute;left:494px;top:792px" width="10" height="12" viewBox="0 0 10 12"><path d="M1 1 L9 6 L1 11 Z" fill="#444"/></svg>
<svg style="position:absolute;left:532px;top:791px" width="14" height="14" viewBox="0 0 14 14"><rect x="11" y="1" width="2" height="12" fill="#444"/><path d="M1 2 L9 7 L1 12 Z" fill="#444"/></svg>
<div style="position:absolute;left:579px;top:785px;width:67px;height:25px;box-sizing:border-box;border:1px solid #c8c8c8;border-radius:3px;background:#fff;"></div>
<div style="position:absolute;left:580px;top:786px;width:50px;height:18px;overflow:hidden;">
<div style="position:absolute;left:-580px;top:-786px;width:1908px;height:898px;">
<div style="position:absolute;left:593.08px;top:795.26px;font-size:13.52px;line-height:13.52px;color:#444;white-space:nowrap;transform:scaleX(0.9214);transform-origin:0 0;">50</div>
</div></div>
<svg style="position:absolute;left:631px;top:793px" width="10" height="8" viewBox="0 0 10 8"><path d="M1 1.5 L5 5.5 L9 1.5" fill="none" stroke="#333" stroke-width="1.6"/></svg>
<div style="position:absolute;left:648.79px;top:788.90px;font-size:14.53px;line-height:14.53px;color:#555;white-space:nowrap;transform:scaleX(1.0116);transform-origin:0 0;">items per page</div>
<div style="position:absolute;left:1723.72px;top:792.72px;font-size:14.97px;line-height:14.97px;color:#555;white-space:nowrap;transform:scaleX(0.9781);transform-origin:0 0;">1 - 50 of 114113 items</div>
<div style="position:absolute;left:289.10px;top:876.86px;font-size:11.05px;line-height:11.05px;color:#666;white-space:nowrap;transform:scaleX(0.9794);transform-origin:0 0;">SPORIFY 21.3 Enterprise</div>
<svg style="position:absolute;left:1524px;top:871px" width="16" height="16" viewBox="0 0 16 16"><circle cx="8" cy="8" r="7.9" fill="#4a86c0"/><circle cx="8" cy="4.3" r="1.2" fill="#fff"/><path d="M6.2 6.6 L9 6.6 L9 11.2 L10 11.2 L10 12.4 L6.2 12.4 L6.2 11.2 L7.2 11.2 L7.2 7.8 L6.2 7.8 Z" fill="#fff"/></svg>
<div style="position:absolute;left:1543.40px;top:875.59px;font-size:11.48px;line-height:11.48px;color:#666;white-space:nowrap;transform:scaleX(0.9907);transform-origin:0 0;">Current Timezone: (UTC+00:00) Dublin, Edinburgh, Lisbon, London</div>
<div style="position:absolute;left:0px;top:895px;width:1908px;height:3px;background:#f1f1f1;"></div>
<div style="position:absolute;left:16px;top:897px;width:1635px;height:1px;background:#c1c1c1;"></div>
</body></html>
